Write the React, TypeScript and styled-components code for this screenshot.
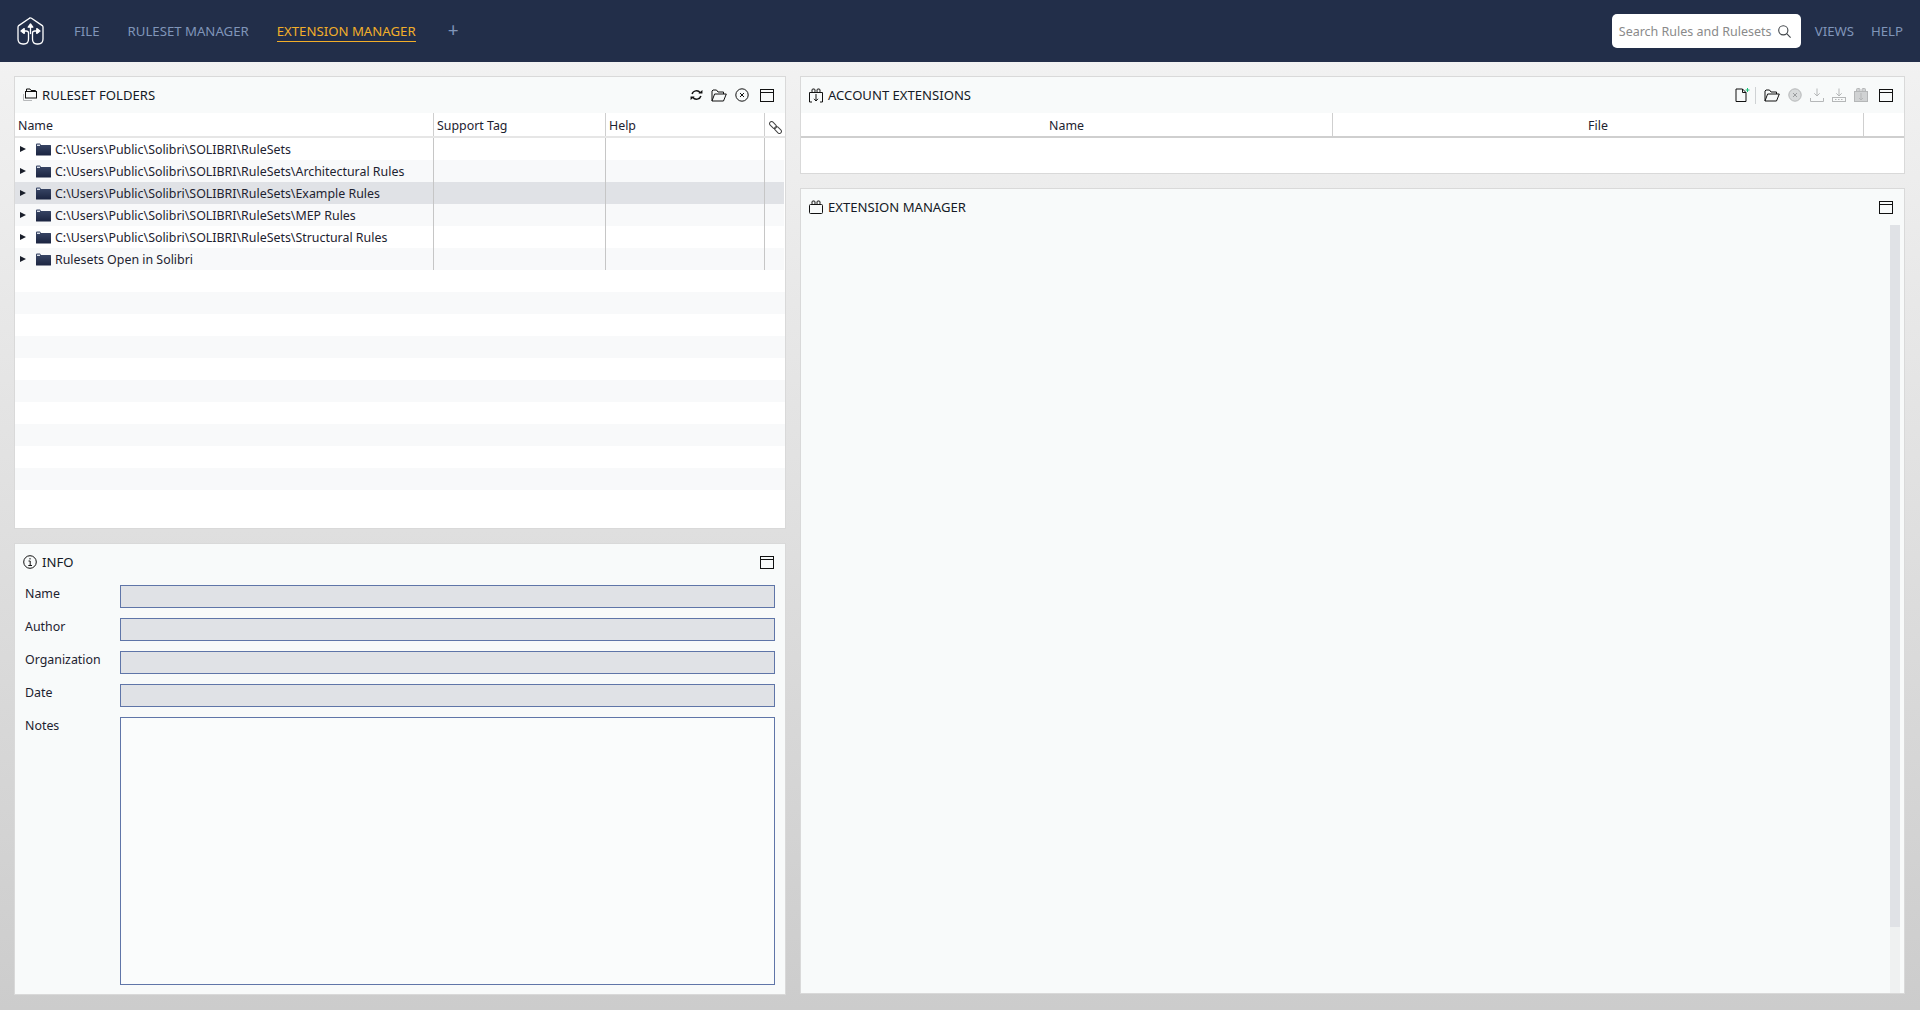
import { Fragment } from 'react';
import styled, { createGlobalStyle } from 'styled-components';

const GlobalStyle = createGlobalStyle`
  html, body {
    margin: 0;
    padding: 0;
    height: 100%;
  }
  body {
    font-family: 'Noto Sans', 'Open Sans', sans-serif;
    font-size: 12.4px;
    color: #1a1f2b;
    overflow: hidden;
  }
  * {
    box-sizing: border-box;
  }
`;

const Page = styled.div`
  width: 1920px;
  height: 1010px;
  display: flex;
  flex-direction: column;
  background: linear-gradient(180deg, #f4f4f4 0%, #cccccc 100%);
`;

const NavBar = styled.header`
  height: 62px;
  flex: none;
  display: flex;
  align-items: center;
  padding: 0 17px;
  background-color: #222e49;
`;

const LogoSlot = styled.div`
  width: 27px;
  height: 28px;
  margin-right: 30px;
  display: flex;
`;

const NavItem = styled.a<{ $active?: boolean }>`
  font-size: 13.2px;
  line-height: 19px;
  margin-top: 2px;
  color: ${(p) => (p.$active ? '#f2ae2a' : '#8095b9')};
  border-bottom: 1px solid ${(p) => (p.$active ? '#f2ae2a' : 'transparent')};
  margin-right: 28px;
  white-space: nowrap;
`;

const PlusSign = styled.span`
  color: #8095b9;
  font-size: 19px;
  line-height: 19px;
  margin: -1px 0 0 4px;
`;

const NavSpacer = styled.div`
  flex: 1;
`;

const SearchBox = styled.div`
  width: 189px;
  height: 34px;
  background-color: #fff;
  border-radius: 5px;
  display: flex;
  align-items: center;
  justify-content: space-between;
  padding: 0 10px 0 7px;
  margin-right: 14px;
  color: #8a8a8a;
  font-size: 12.5px;
  white-space: nowrap;
`;

const RightNav = styled(NavItem)`
  margin-right: 17px;
  &:last-child {
    margin-right: 0;
  }
`;

const Workspace = styled.main`
  flex: 1;
  min-height: 0;
  display: grid;
  grid-template-columns: 772px 1105px;
  column-gap: 14px;
  padding: 14px 15px 15px 14px;
`;

const Column = styled.div<{ $rows: string }>`
  display: grid;
  grid-template-rows: ${(p) => p.$rows};
  row-gap: 14px;
  min-height: 0;
`;

const Panel = styled.section`
  display: flex;
  flex-direction: column;
  background-color: #f8fafa;
  border: 1px solid #d9d9d9;
  min-height: 0;
  overflow: hidden;
`;

const PanelHeader = styled.div`
  height: 36px;
  flex: none;
  display: flex;
  align-items: center;
  padding: 0 11px 0 8px;
`;

const PanelTitle = styled.h2`
  margin: 0 0 0 5px;
  font-size: 13.1px;
  line-height: 18px;
  font-weight: 400;
  color: #151a26;
  flex: 1;
`;

const Tools = styled.div`
  display: flex;
  align-items: center;
  gap: 8px;
  margin-right: 11px;
`;

const ToolDivider = styled.span`
  width: 1px;
  height: 17px;
  margin-left: -4px;
  background-color: #cfd2d4;
`;

const TableHead = styled.div<{ $columns: string; $line: string }>`
  display: grid;
  grid-template-columns: ${(p) => p.$columns};
  height: 25px;
  flex: none;
  background-color: #fff;
  border-bottom: 2px solid ${(p) => p.$line};
`;

const HeadCell = styled.div<{ $center?: boolean }>`
  font-size: 12.4px;
  line-height: 26px;
  height: 23px;
  padding-left: ${(p) => (p.$center ? '0' : '3px')};
  border-right: 1px solid #cfcfcf;
  white-space: nowrap;
  text-align: ${(p) => (p.$center ? 'center' : 'left')};
  color: #1d2230;
  &:last-child {
    border-right: none;
  }
`;

const LinkCell = styled(HeadCell)`
  padding: 4px 0 0 4px;
`;

const TableBody = styled.div`
  flex: 1;
  min-height: 0;
  background-color: #fff;
`;

const RuleRow = styled.div<{ $striped?: boolean; $selected?: boolean }>`
  display: grid;
  grid-template-columns: 419px 172px 159px 19px;
  height: 22px;
  margin-right: 1px;
  background-color: ${(p) => (p.$selected ? '#e0e2e6' : p.$striped ? '#f8f9fa' : '#fff')};
`;

const NameCell = styled.div`
  display: flex;
  align-items: center;
  padding-left: 5px;
  white-space: nowrap;
  color: #1d2230;
  border-right: 1px solid #c6c6c6;
`;

const EmptyCell = styled.div`
  border-right: 1px solid #c6c6c6;
  &:last-child {
    border-right: none;
  }
`;

const Expander = styled.span`
  width: 0;
  height: 0;
  border-top: 3.5px solid transparent;
  border-bottom: 3.5px solid transparent;
  border-left: 6px solid #1a1f2b;
  margin-right: 10px;
`;

const FolderSlot = styled.span`
  display: flex;
  margin-right: 4px;
`;

const BlankRow = styled.div<{ $striped?: boolean }>`
  height: 22px;
  background-color: ${(p) => (p.$striped ? '#f8f9fa' : '#fff')};
`;

const InfoForm = styled.div`
  flex: 1;
  min-height: 0;
  display: grid;
  grid-template-columns: 95px 655px;
  grid-template-rows: 23px 23px 23px 23px 268px;
  row-gap: 10px;
  padding: 5px 0 0 10px;
`;

const FieldLabel = styled.label`
  line-height: 17px;
  color: #1d2230;
`;

const ReadOnlyField = styled.div<{ $multiline?: boolean }>`
  border: 1px solid #5f75a8;
  background-color: ${(p) => (p.$multiline ? '#fafcfc' : '#e0e2e6')};
`;

const AccountBody = styled.div`
  flex: 1;
  background-color: #fff;
`;

const ManagerBody = styled.div`
  flex: 1;
  min-height: 0;
  display: flex;
  justify-content: flex-end;
  padding: 0 4px 0 0;
`;

const ScrollTrack = styled.div`
  width: 10px;
  background-color: #eff1f1;
`;

const ScrollThumb = styled.div`
  height: 702px;
  background-color: #e0e2e6;
`;

type IconProps = { color?: string };

const Logo = () => (
  <svg width="27" height="28" viewBox="0 0 27 28" fill="none" stroke="#fff" strokeWidth="1.3" strokeLinecap="round" strokeLinejoin="round">
    <path d="M12.5 1.2 Q13.5 0.6 14.5 1.2 L25.3 8.6 Q26 9.2 26 10.2 V22 Q26 27 21 27 H20 Q15.5 27 15.5 22 V16 Q15.5 14 18 14 H20" />
    <path d="M12.5 1.2 L1.7 8.6 Q1 9.2 1 10.2 V22 Q1 27 6 27 H7 Q11.5 27 11.5 22 V16 Q11.5 14 9 14 H7" />
    <path d="M13.5 9 V16.5" />
    <path d="M11.2 10.2 L13.5 7 L15.8 10.2 Z" fill="#fff" />
    <path d="M19.8 11.6 L23 14 L19.8 16.4 Z" fill="#fff" />
    <path d="M7.2 11.6 L4 14 L7.2 16.4 Z" fill="#fff" />
  </svg>
);

const SearchIcon = () => (
  <svg width="13" height="13" viewBox="0 0 13 13" fill="none" stroke="#3f4448" strokeWidth="1.1">
    <circle cx="5.3" cy="5.3" r="4.6" />
    <path d="M8.7 8.7 L12.6 12.6" />
  </svg>
);

const PanelFolders = () => (
  <svg width="14" height="14" viewBox="0 0 14 14" fill="none">
    <path d="M0.5 6 V12.5 H9" stroke="#b7b9bb" />
    <path d="M3.5 3.5 V1 H7 L8 2.5 H12.5 V3.5" stroke="#111" />
    <rect x="2.5" y="3.5" width="11" height="6.5" stroke="#111" />
  </svg>
);

const BlockOutline = ({ color = '#111', arrow }: IconProps & { arrow?: boolean }) => (
  <svg width="14" height="15" viewBox="0 0 14 15" fill="none" stroke={color} strokeWidth="1">
    <rect x="3" y="1" width="3" height="3.5" rx="1" />
    <rect x="8" y="1" width="3" height="3.5" rx="1" />
    {arrow ? (
      <>
        <path d="M3 4.5 H0.5 V14 H3" />
        <path d="M11 4.5 H13.5 V14 H11" />
        <path d="M3 4.5 H11" />
        <path d="M7 6 V13 M5 10.8 L7 13 L9 10.8" />
      </>
    ) : (
      <rect x="0.5" y="4.5" width="13" height="9" rx="1" />
    )}
  </svg>
);

const InfoIcon = () => (
  <svg width="14" height="14" viewBox="0 0 14 14" fill="none" stroke="#111">
    <circle cx="7" cy="7" r="6.3" />
    <path d="M5.5 6 H7.2 V10.5 M5.3 10.5 H9 M7 3 V4.5" />
  </svg>
);

const RefreshIcon = () => (
  <svg width="13" height="12" viewBox="0 0 14 13" fill="none" stroke="#111" strokeWidth="1.6">
    <path d="M2.2 5.5 A5 5 0 0 1 11 4" />
    <path d="M11.8 7.5 A5 5 0 0 1 3 9" />
    <path d="M9 5 H13.4 V1 Z" fill="#111" stroke="none" />
    <path d="M5 8 H0.6 V12 Z" fill="#111" stroke="none" />
  </svg>
);

const OpenFolder = () => (
  <svg width="16" height="13" viewBox="0 0 16 13" fill="none" stroke="#111">
    <path d="M1 12 V2 L2 1 H5.5 L7 3 H12.5 V5" />
    <path d="M1 12 H12.5 L15.3 5 H3.6 Z" />
  </svg>
);

const CloseCircle = ({ color = '#111', fill = 'none', mark = '#111' }: IconProps & { fill?: string; mark?: string }) => (
  <svg width="14" height="14" viewBox="0 0 14 14" fill={fill} stroke={color}>
    <circle cx="7" cy="7" r="6.2" />
    <path d="M5 5 L9 9 M9 5 L5 9" stroke={mark} />
  </svg>
);

const WindowIcon = () => (
  <svg width="14" height="13" viewBox="0 0 14 13" fill="none" stroke="#111">
    <rect x="0.5" y="0.5" width="13" height="12" />
    <path d="M0.5 3.5 H13.5" />
  </svg>
);

const LinkIcon = () => (
  <svg width="13" height="13" viewBox="0 0 13 13" fill="none" stroke="#444">
    <g transform="rotate(45 6.5 6.5)">
      <rect x="-1" y="4.5" width="8" height="4" rx="2" />
      <rect x="6" y="4.5" width="8" height="4" rx="2" />
    </g>
  </svg>
);

const NewFile = () => (
  <svg width="16" height="14" viewBox="0 0 16 14" fill="none">
    <path d="M1 1 H7.5 L11 4.5 V13.5 H1 Z M7.5 1 V4.5 H11" stroke="#111" />
    <path d="M12.5 0 V4 M10.5 2 H14.5" stroke="#1cc37b" />
  </svg>
);

const DownloadTray = ({ dotted }: { dotted?: boolean }) => (
  <svg width="14" height="14" viewBox="0 0 14 14" fill="none" stroke="#b5b7b8">
    <path d="M7 0.5 V8 M4.3 5.3 L7 8 L9.7 5.3" />
    {dotted ? (
      <>
        <rect x="0.5" y="9.5" width="13" height="4" />
        <path d="M3 11.5 H11" strokeDasharray="1.5 1.5" />
      </>
    ) : (
      <path d="M0.5 10 V13.5 H13.5 V10" />
    )}
  </svg>
);

const BlockFilled = () => (
  <svg width="14" height="14" viewBox="0 0 14 14" fill="#d0d2d3" stroke="#b5b7b8">
    <rect x="2.5" y="0.5" width="3.5" height="3.5" rx="1" />
    <rect x="8" y="0.5" width="3.5" height="3.5" rx="1" />
    <rect x="0.5" y="3.5" width="13" height="10" />
    <path d="M7 5 V12 M5 10 L7 12 L9 10" fill="none" />
  </svg>
);

const TreeFolder = () => (
  <svg width="15" height="13" viewBox="0 0 15 13">
    <defs>
      <linearGradient id="folderFill" x1="0" y1="0" x2="0" y2="1">
        <stop offset="0" stopColor="#3a4868" />
        <stop offset="1" stopColor="#1b2440" />
      </linearGradient>
    </defs>
    <path d="M0 1.5 Q0 0.5 1 0.5 H4 L5 2 H14.5 Q15 2 15 2.5 V12 Q15 12.5 14.5 12.5 H0.5 Q0 12.5 0 12 Z" fill="url(#folderFill)" />
    <path d="M1 1.6 H4 V3 H1 Z" fill="#d9dee8" />
  </svg>
);

const RULE_FOLDERS = [
  'C:\\Users\\Public\\Solibri\\SOLIBRI\\RuleSets',
  'C:\\Users\\Public\\Solibri\\SOLIBRI\\RuleSets\\Architectural Rules',
  'C:\\Users\\Public\\Solibri\\SOLIBRI\\RuleSets\\Example Rules',
  'C:\\Users\\Public\\Solibri\\SOLIBRI\\RuleSets\\MEP Rules',
  'C:\\Users\\Public\\Solibri\\SOLIBRI\\RuleSets\\Structural Rules',
  'Rulesets Open in Solibri',
];

const INFO_FIELDS = ['Name', 'Author', 'Organization', 'Date'];
const BLANK_ROWS = [...Array(10).keys()];

function App() {
  return (
    <Page>
      <GlobalStyle />
      <NavBar>
        <LogoSlot>
          <Logo />
        </LogoSlot>
        <NavItem>FILE</NavItem>
        <NavItem>RULESET MANAGER</NavItem>
        <NavItem $active>EXTENSION MANAGER</NavItem>
        <PlusSign>+</PlusSign>
        <NavSpacer />
        <SearchBox>
          Search Rules and Rulesets
          <SearchIcon />
        </SearchBox>
        <RightNav>VIEWS</RightNav>
        <RightNav>HELP</RightNav>
      </NavBar>
      <Workspace>
        <Column $rows="453px 452px">
          <Panel>
            <PanelHeader>
              <PanelFolders />
              <PanelTitle>RULESET FOLDERS</PanelTitle>
              <Tools>
                <RefreshIcon />
                <OpenFolder />
                <CloseCircle />
              </Tools>
              <WindowIcon />
            </PanelHeader>
            <TableHead $columns="419px 172px 159px 20px" $line="#e6e6e6">
              <HeadCell>Name</HeadCell>
              <HeadCell>Support Tag</HeadCell>
              <HeadCell>Help</HeadCell>
              <LinkCell>
                <LinkIcon />
              </LinkCell>
            </TableHead>
            <TableBody>
              {RULE_FOLDERS.map((folder, idx) => (
                <RuleRow key={folder} $striped={idx % 2 === 1} $selected={idx === 2}>
                  <NameCell>
                    <Expander />
                    <FolderSlot>
                      <TreeFolder />
                    </FolderSlot>
                    {folder}
                  </NameCell>
                  <EmptyCell />
                  <EmptyCell />
                  <EmptyCell />
                </RuleRow>
              ))}
              {BLANK_ROWS.map((row) => (
                <BlankRow key={row} $striped={row % 2 === 1} />
              ))}
            </TableBody>
          </Panel>
          <Panel>
            <PanelHeader>
              <InfoIcon />
              <PanelTitle>INFO</PanelTitle>
              <WindowIcon />
            </PanelHeader>
            <InfoForm>
              {INFO_FIELDS.map((field) => (
                <Fragment key={field}>
                  <FieldLabel>{field}</FieldLabel>
                  <ReadOnlyField />
                </Fragment>
              ))}
              <FieldLabel>Notes</FieldLabel>
              <ReadOnlyField $multiline />
            </InfoForm>
          </Panel>
        </Column>
        <Column $rows="98px 806px">
          <Panel>
            <PanelHeader>
              <BlockOutline arrow />
              <PanelTitle>ACCOUNT EXTENSIONS</PanelTitle>
              <Tools>
                <NewFile />
                <ToolDivider />
                <OpenFolder />
                <CloseCircle color="#b5b7b8" fill="#d8dadb" mark="#9a9c9e" />
                <DownloadTray />
                <DownloadTray dotted />
                <BlockFilled />
              </Tools>
              <WindowIcon />
            </PanelHeader>
            <TableHead $columns="532px 531px 1fr" $line="#cfcfcf">
              <HeadCell $center>Name</HeadCell>
              <HeadCell $center>File</HeadCell>
              <HeadCell />
            </TableHead>
            <AccountBody />
          </Panel>
          <Panel>
            <PanelHeader>
              <BlockOutline />
              <PanelTitle>EXTENSION MANAGER</PanelTitle>
              <WindowIcon />
            </PanelHeader>
            <ManagerBody>
              <ScrollTrack>
                <ScrollThumb />
              </ScrollTrack>
            </ManagerBody>
          </Panel>
        </Column>
      </Workspace>
    </Page>
  );
}

export default App;
